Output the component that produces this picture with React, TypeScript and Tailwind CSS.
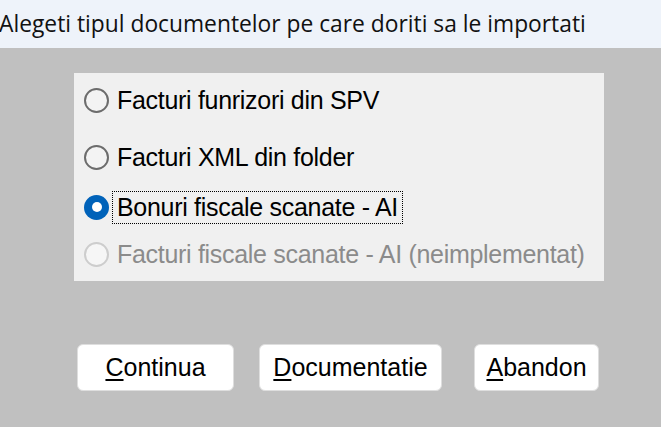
const options = [
  { label: "Facturi funrizori din SPV", checked: false, disabled: false, h: "h-[54px]" },
  { label: "Facturi XML din folder", checked: false, disabled: false, h: "h-[60px]" },
  { label: "Bonuri fiscale scanate - AI", checked: true, disabled: false, h: "h-[40px]" },
  { label: "Facturi fiscale scanate - AI (neimplementat)", checked: false, disabled: true, h: "h-[54px]" },
];

function Radio({ checked, disabled }: { checked: boolean; disabled: boolean }) {
  if (checked) {
    return (
      <span className="w-[25px] h-[25px] rounded-full bg-[#0062b9] grid place-items-center shrink-0">
        <span className="block w-[10px] h-[10px] rounded-full bg-white" />
      </span>
    );
  }
  return (
    <span
      className={`block w-[25px] h-[25px] rounded-full border-2 shrink-0 ${
        disabled ? "border-[#cdcdcd] bg-[#f6f6f6]" : "border-[#6c6c6c] bg-[#f3f3f3]"
      }`}
    />
  );
}

function Btn({ first, rest, w }: { first: string; rest: string; w: string }) {
  return (
    <button className={`${w} h-[47px] rounded-[6px] bg-white border border-[#dedede] text-[25px] leading-none text-black flex items-center justify-center`}>
      <span className="underline underline-offset-[3px] decoration-[1.5px]">{first}</span>
      {rest}
    </button>
  );
}

export default function App() {
  return (
    <div className="w-[661px] h-[427px] bg-[#c0c0c0] flex flex-col overflow-hidden font-['Liberation_Sans',Arial,sans-serif]">
      {/* title strip */}
      <div className="h-[48px] bg-[#eef3fa] flex items-center">
        <span className="text-[22.8px] text-[#111] font-['Open_Sans',sans-serif] -ml-[1px] leading-none">
          Alegeti tipul documentelor pe care doriti sa le importati
        </span>
      </div>

      {/* options */}
      <div className="ml-[74px] mt-[25px] w-[530px] h-[208px] bg-[#f0f0f0] flex flex-col pl-[10px]">
        {options.map((o, i) => (
          <div key={i} className={`${o.h} flex items-center gap-[3px]`}>
            <Radio checked={o.checked} disabled={o.disabled} />
            <span
              className={`h-[33px] flex items-center text-[25px] leading-[25px] tracking-[-0.3px] px-[4px] border border-dotted ${
                o.checked ? "border-black" : "border-transparent"
              } ${o.disabled ? "text-[#8b8b8b]" : "text-black"}`}
            >
              {o.label}
            </span>
          </div>
        ))}
      </div>

      {/* buttons */}
      <div className="mt-[63px] flex pl-[77px]">
        <Btn first="C" rest="ontinua" w="w-[157px]" />
        <div className="w-[25px]" />
        <Btn first="D" rest="ocumentatie" w="w-[183px]" />
        <div className="w-[32px]" />
        <Btn first="A" rest="bandon" w="w-[125px]" />
      </div>
    </div>
  );
}
